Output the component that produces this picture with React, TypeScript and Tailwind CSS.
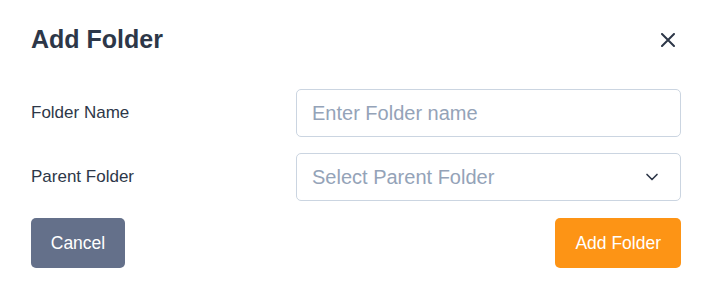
import { ChevronDown } from "lucide-react";

export default function App() {
  return (
    <div className="w-[703px] h-[306px] bg-white pt-5 pl-[31px] pr-[22px] font-['Liberation_Sans',Arial,sans-serif]">
      <div className="flex h-10 items-center justify-between">
        <h2 className="text-[25px] font-bold text-[#2d3748]">Add Folder</h2>
        <button className="mr-[6px] text-[#2d3748]">
          <svg width="14" height="14" viewBox="0 0 14 14" fill="none" stroke="currentColor" strokeWidth="2" strokeLinecap="round">
            <path d="M1 1L13 13M13 1L1 13" />
          </svg>
        </button>
      </div>

      <div className="mt-[29px] space-y-4">
        <div className="flex items-center justify-between">
          <label className="text-[17px] text-[#2d3748]">Folder Name</label>
          <input
            type="text"
            placeholder="Enter Folder name"
            className="h-12 w-[385px] rounded-[5px] border border-[#cbd5e1] pl-[15px] text-[20px] text-[#2d3748] outline-none placeholder:text-[#94a3b8]"
          />
        </div>
        <div className="flex items-center justify-between">
          <label className="text-[17px] text-[#2d3748]">Parent Folder</label>
          <div className="flex h-12 w-[385px] items-center justify-between rounded-[5px] border border-[#cbd5e1] pl-[15px] pr-[18px]">
            <span className="text-[20px] text-[#94a3b8]">Select Parent Folder</span>
            <ChevronDown size={20} strokeWidth={2} className="text-[#2d3748]" />
          </div>
        </div>
      </div>

      <div className="mt-[17px] flex justify-between">
        <button className="h-[50px] w-[94px] rounded-[5px] bg-[#64708a] text-[17.5px] text-white">Cancel</button>
        <button className="h-[50px] rounded-[5px] bg-[#fd9415] px-5 text-[17.5px] text-white">Add Folder</button>
      </div>
    </div>
  );
}
